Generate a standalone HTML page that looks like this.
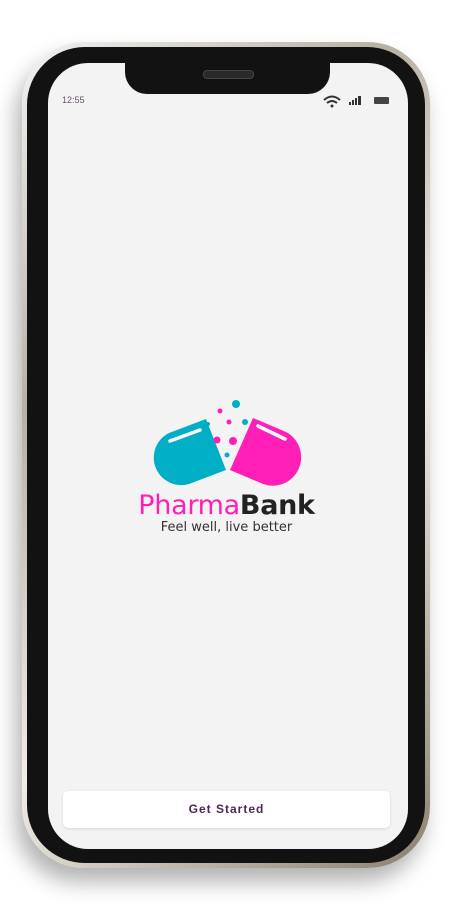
<!DOCTYPE html>
<html><head><meta charset="utf-8"><style>
html,body{margin:0;padding:0;width:453px;height:908px;background:#fff;overflow:hidden;font-family:"Liberation Sans",sans-serif}
.frame{position:absolute;left:22px;top:42px;width:408px;height:826px;border-radius:62px;background:linear-gradient(135deg,#f4f4f4,#b8b0a4 30%,#f0ece6 60%,#8a8070);box-shadow:-6px 14px 22px rgba(0,0,0,.3)}
.bez{position:absolute;left:27px;top:47px;width:398px;height:816px;border-radius:58px;background:#121212}
.screen{position:absolute;left:48px;top:63px;width:360px;height:786px;border-radius:40px;background:#f3f3f3;overflow:hidden}
.notch{position:absolute;left:125px;top:60px;width:205px;height:34px;background:#121212;border-radius:0 0 22px 22px}
.spk{position:absolute;left:203px;top:70px;width:49px;height:7px;border-radius:4px;background:#2a2a2a;border:1px solid #444}
.time{position:absolute;left:62px;top:95px;font-size:9px;color:#6a5270}
.btn{position:absolute;left:63px;top:791px;width:327px;height:37px;background:#fff;border-radius:5px;box-shadow:0 1px 3px rgba(0,0,0,.12);text-align:center;line-height:37px;font-size:12px;letter-spacing:1px;color:#4a2a50;font-weight:bold}
.t1{position:absolute;left:0;width:453px;top:490px;text-align:center;font-family:"DejaVu Sans",sans-serif;font-size:27px;letter-spacing:-0.3px}
.t2{position:absolute;left:0;width:453px;top:520px;text-align:center;font-family:"DejaVu Sans",sans-serif;font-size:13px;color:#333}
</style></head><body>
<div class="frame"></div><div class="bez"></div><div class="screen"></div>
<div class="notch"></div><div class="spk"></div>
<div class="time">12:55</div>
<svg style="position:absolute;left:0;top:0" width="453" height="908">
<path d="M324 100 q8-7 16 0 M327 103 q5-4 10 0" stroke="#333" stroke-width="2" fill="none"/><circle cx="332" cy="106" r="1.5" fill="#333"/>
<rect x="349" y="102" width="2" height="3" fill="#333"/><rect x="352" y="100" width="2" height="5" fill="#333"/><rect x="355" y="98" width="2" height="7" fill="#333"/><rect x="358" y="96" width="3" height="9" fill="#333"/>
<rect x="374" y="97" width="15" height="7" rx="1" fill="#444"/>
<path d="M206 419 L226 470 L189 484 A27.5 27.5 0 0 1 169 433 Z" fill="#00aec5"/>
<path d="M253 418 L230 470 L263 484 A28.5 28.5 0 0 0 286 432 Z" fill="#ff1fb7"/>
<line x1="170" y1="441" x2="200" y2="430" stroke="#fff" stroke-width="3.5" stroke-linecap="round"/>
<line x1="258" y1="426" x2="285" y2="439" stroke="#fff" stroke-width="3.5" stroke-linecap="round"/>
<circle cx="236" cy="404" r="4" fill="#00aec5"/><circle cx="220" cy="411" r="2.5" fill="#ff1fb7"/>
<circle cx="208" cy="424" r="2" fill="#00aec5"/><circle cx="229" cy="422" r="2.5" fill="#ff1fb7"/>
<circle cx="245" cy="422" r="3" fill="#00aec5"/><circle cx="217" cy="440" r="3.5" fill="#ff1fb7"/>
<circle cx="233" cy="441" r="4" fill="#ff1fb7"/><circle cx="227" cy="455" r="2.5" fill="#00aec5"/>
</svg>
<div class="t1"><span style="color:#ff1fb7">Pharma</span><span style="color:#222;font-weight:bold">Bank</span></div>
<div class="t2">Feel well, live better</div>
<div class="btn">Get Started</div>
</body></html>
